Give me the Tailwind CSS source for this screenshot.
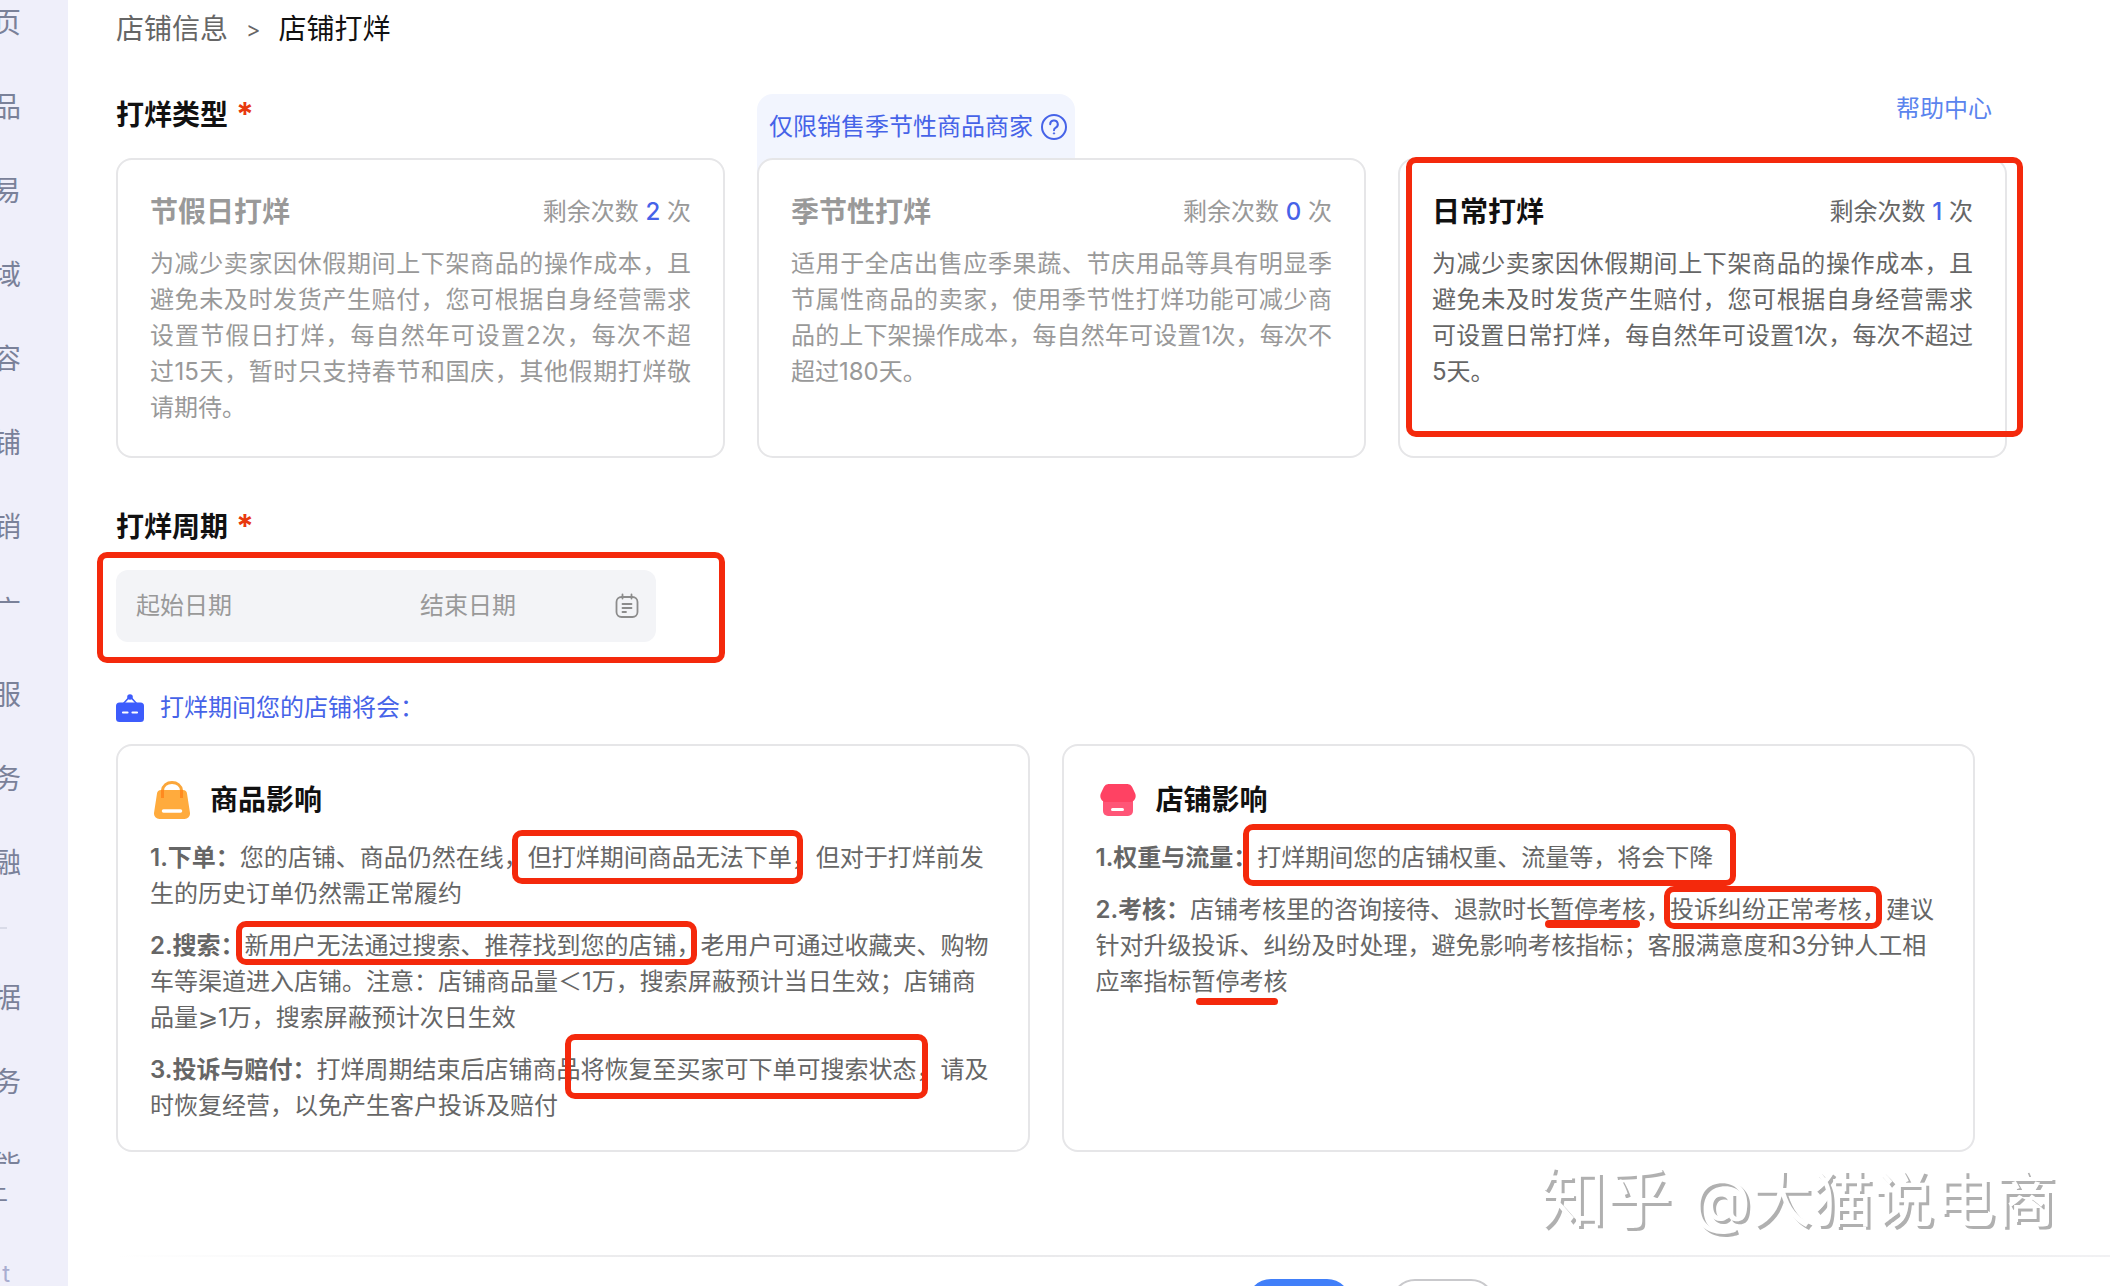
<!DOCTYPE html>
<html lang="zh-CN">
<head>
    <meta charset="UTF-8">
    <meta name="viewport" content="width=device-width, initial-scale=1.0">
    <title>店铺打烊</title>
    <!-- Include Tailwind CSS from CDN -->
    <script src="https://cdn.jsdelivr.net/npm/@tailwindcss/browser@4"></script>
</head>
<body class="bg-white font-['Inter','Noto_Sans_CJK_SC',sans-serif] text-2xl">
    <div class="relative flex h-screen overflow-hidden">
        <!-- Collapsed side menu -->
        <nav class="w-[68px] shrink-0 overflow-hidden bg-[#efeffa] text-[28px] text-[#7a8199]">
            <ul class="-mt-[19px] w-[21px] leading-[84px]">
                <li class="flex h-[84px] justify-end">页</li>
                <li class="flex h-[84px] justify-end">品</li>
                <li class="flex h-[84px] justify-end">易</li>
                <li class="flex h-[84px] justify-end">域</li>
                <li class="flex h-[84px] justify-end">容</li>
                <li class="flex h-[84px] justify-end">铺</li>
                <li class="flex h-[84px] justify-end">销</li>
                <li class="flex h-[84px] justify-end">广</li>
                <li class="flex h-[84px] justify-end">服</li>
                <li class="flex h-[84px] justify-end">务</li>
                <li class="flex h-[84px] justify-end">融</li>
            </ul>
            <hr class="mt-[22px] mb-[27px] w-[7px] border-t-2 border-[#d9dbe8]">
            <ul class="w-[21px] leading-[84px]">
                <li class="flex h-[84px] justify-end">据</li>
                <li class="flex h-[84px] justify-end">务</li>
                <li class="flex h-10 justify-end overflow-hidden">能</li>
            </ul>
            <div class="mt-2 flex w-2 justify-end text-2xl leading-10">上</div>
            <div class="mt-10 flex w-[10px] justify-end text-2xl leading-[44px] text-[#a9add0]">t</div>
        </nav>

        <main class="min-w-0 flex-1 pt-[9px] pr-[103px] pl-12">
            <nav class="flex items-center gap-[18px] text-[28px] leading-10">
                <a href="#" class="text-[#666]">店铺信息</a>
                <span class="text-[22px] text-[#666]">&gt;</span>
                <span class="text-[#111]">店铺打烊</span>
            </nav>

            <div class="mt-[46px] flex items-start justify-between">
                <h2 class="flex gap-2 text-[28px] leading-10 font-bold text-[#111]">打烊类型 <span class="text-[32px] text-[#e8390f]">*</span></h2>
                <a href="#" class="mr-[15px] leading-7 text-[#5b84ee]">帮助中心</a>
            </div>

            <section class="mt-[23px] grid grid-cols-3 gap-8">
                <article class="rounded-2xl border-2 border-[#e6e6e8] bg-white px-8 pt-8 pb-[30px] text-[#999]">
                    <header class="flex items-center justify-between leading-10">
                        <h3 class="text-[28px] font-bold">节假日打烊</h3>
                        <p>剩余次数 <span class="font-medium text-[#4663e8]">2</span> 次</p>
                    </header>
                    <p class="mt-3.5 text-justify leading-9">为减少卖家因休假期间上下架商品的操作成本，且避免未及时发货产生赔付，您可根据自身经营需求设置节假日打烊，每自然年可设置2次，每次不超过15天，暂时只支持春节和国庆，其他假期打烊敬请期待。</p>
                </article>

                <div class="relative">
                    <div class="absolute -top-16 left-0 flex h-20 items-start gap-2 rounded-t-2xl bg-[#f2f5fe] pr-2 pl-3 pt-[15px] leading-9 text-[#4663e8]">
                        仅限销售季节性商品商家
                        <svg class="mt-[5px] size-[26px]" viewBox="0 0 26 26" fill="none" stroke="currentColor" stroke-width="2">
                            <circle cx="13" cy="13" r="12" />
                            <path d="M9.2 10.2a3.8 3.8 0 1 1 5.6 3.4c-1.2.7-1.8 1.2-1.8 2.6" stroke-linecap="round" />
                            <circle cx="13" cy="19.4" r=".7" fill="currentColor" stroke-width="1" />
                        </svg>
                    </div>
                    <article class="relative h-full rounded-2xl border-2 border-[#e6e6e8] bg-white px-8 pt-8 pb-[30px] text-[#999]">
                        <header class="flex items-center justify-between leading-10">
                            <h3 class="text-[28px] font-bold">季节性打烊</h3>
                            <p>剩余次数 <span class="font-medium text-[#4663e8]">0</span> 次</p>
                        </header>
                        <p class="mt-3.5 text-justify leading-9">适用于全店出售应季果蔬、节庆用品等具有明显季节属性商品的卖家，使用季节性打烊功能可减少商品的上下架操作成本，每自然年可设置1次，每次不超过180天。</p>
                    </article>
                </div>

                <article class="relative rounded-2xl border-2 border-[#e6e6e8] bg-white px-8 pt-8 pb-[30px] text-[#666]">
                    <header class="flex items-center justify-between leading-10">
                        <h3 class="text-[28px] font-bold text-[#111]">日常打烊</h3>
                        <p>剩余次数 <span class="font-medium text-[#4663e8]">1</span> 次</p>
                    </header>
                    <p class="mt-3.5 text-justify leading-9">为减少卖家因休假期间上下架商品的操作成本，且避免未及时发货产生赔付，您可根据自身经营需求可设置日常打烊，每自然年可设置1次，每次不超过5天。</p>
                    <div class="pointer-events-none absolute -top-[3px] -right-[18px] left-1.5 h-[280px] rounded-[10px] border-6 border-[#f4290c]"></div>
                </article>
            </section>

            <h2 class="mt-[49px] flex gap-2 text-[28px] leading-10 font-bold text-[#111]">打烊周期 <span class="text-[32px] text-[#e8390f]">*</span></h2>
            <div class="relative mt-[23px] flex h-[72px] w-[540px] items-center rounded-xl bg-[#f3f4f7] pr-4 pl-5">
                <input type="text" aria-label="起始日期" placeholder="起始日期" class="w-[284px] bg-transparent outline-none placeholder:text-[#999]">
                <input type="text" aria-label="结束日期" placeholder="结束日期" class="min-w-0 flex-1 bg-transparent outline-none placeholder:text-[#999]">
                <svg class="size-[26px]" viewBox="0 0 26 26" fill="none" stroke="#8c8c8c" stroke-width="1.8" stroke-linecap="round">
                    <rect x="2.500" y="4" width="21" height="20" rx="5" />
                    <path d="M8.500 1.500v4M17.500 1.500v4M8.500 11h9M8.500 15h9M8.500 19h3.500" />
                </svg>
                <div class="pointer-events-none absolute -top-[18px] -left-[19px] h-[111px] w-[628px] rounded-[10px] border-6 border-[#f4290c]"></div>
            </div>

            <div class="mt-[46px] flex items-center gap-4 leading-10 text-[#4663e8]">
                <svg class="size-7" viewBox="0 0 28 28">
                    <path d="M7.500 9.500L12.500 4h3l5 5.500" fill="none" stroke="#3d5cfc" stroke-width="1.600" />
                    <circle cx="14" cy="3" r="2.800" fill="#3d5cfc" />
                    <rect y="8.500" width="28" height="19.500" rx="3.500" fill="#3d5cfc" />
                    <path d="M7 18.500h4.500M16.500 18.500H21" stroke="#fff" stroke-width="2.200" stroke-linecap="round" />
                </svg>
                打烊期间您的店铺将会：
            </div>

            <section class="mr-8 mt-4 grid grid-cols-2 gap-8 text-[#666]">
                <article class="relative rounded-2xl border-2 border-[#e6e6e8] px-8 pt-8 pb-[26px]">
                    <header class="flex items-center gap-5 pl-1">
                        <svg class="h-[38px] w-9" viewBox="0 0 36 38">
                            <path d="M7 9h22a4 4 0 0 1 4 3.500L36 32a5.500 5.500 0 0 1-5.500 6h-25A5.500 5.500 0 0 1 0 32l3-19.500A4 4 0 0 1 7 9z" fill="#ffab3d" />
                            <path d="M8.500 9.500C9 4.500 13 1.500 18 1.500s9 3 9.500 8" fill="none" stroke="#fba63a" stroke-width="3" />
                            <path d="M8.500 9v8M27.500 9v8" stroke="#ff8a1f" stroke-width="3" />
                            <path d="M9.500 30h17" stroke="#fff" stroke-width="3.500" stroke-linecap="round" />
                        </svg>
                        <h3 class="text-[28px] leading-11 font-bold text-[#111]">商品影响</h3>
                    </header>
                    <div class="mt-[18px] space-y-4 leading-9">
                        <p><b class="font-semibold">1.下单：</b>您的店铺、商品仍然在线，但打烊期间商品无法下单，但对于打烊前发生的历史订单仍然需正常履约</p>
                        <p><b class="font-semibold">2.搜索：</b>新用户无法通过搜索、推荐找到您的店铺，老用户可通过收藏夹、购物车等渠道进入店铺。注意：店铺商品量＜1万，搜索屏蔽预计当日生效；店铺商品量⩾1万，搜索屏蔽预计次日生效</p>
                        <p><b class="font-semibold">3.投诉与赔付：</b>打烊周期结束后店铺商品将恢复至买家可下单可搜索状态，请及时恢复经营，以免产生客户投诉及赔付</p>
                    </div>
                    <div class="pointer-events-none absolute top-[84px] left-[394px] h-[54px] w-[291px] rounded-[10px] border-6 border-[#f4290c]"></div>
                    <div class="pointer-events-none absolute top-[175px] left-[118px] h-[44px] w-[461px] rounded-[10px] border-6 border-[#f4290c]"></div>
                    <div class="pointer-events-none absolute top-[288px] left-[447px] h-[65px] w-[363px] rounded-[10px] border-6 border-[#f4290c]"></div>
                </article>

                <article class="relative rounded-2xl border-2 border-[#e6e6e8] px-8 pt-8 pb-[26px]">
                    <header class="flex items-center gap-5 pl-1">
                        <svg class="h-[38px] w-9" viewBox="0 0 36 38">
                            <rect x="3" y="12" width="30" height="23" rx="5" fill="#ff5577" />
                            <path d="M8.500 3h19a5 5 0 0 1 4.500 2.800l3.200 6.700c1.600 4-1 8.500-5.200 8.500H6c-4.200 0-6.800-4.500-5.200-8.500L4 5.800A5 5 0 0 1 8.500 3z" fill="#ff4263" />
                            <path d="M12.500 28.500h10" stroke="#fff" stroke-width="3" stroke-linecap="round" />
                        </svg>
                        <h3 class="text-[28px] leading-11 font-bold text-[#111]">店铺影响</h3>
                    </header>
                    <div class="mt-[18px] space-y-4 leading-9">
                        <p><b class="font-semibold">1.权重与流量：</b>打烊期间您的店铺权重、流量等，将会下降</p>
                        <p><b class="font-semibold">2.考核：</b>店铺考核里的咨询接待、退款时长暂停考核，投诉纠纷正常考核，建议针对升级投诉、纠纷及时处理，避免影响考核指标；客服满意度和3分钟人工相应率指标暂停考核</p>
                    </div>
                    <div class="pointer-events-none absolute top-[78px] left-[179px] h-[62px] w-[493px] rounded-[10px] border-6 border-[#f4290c]"></div>
                    <div class="pointer-events-none absolute top-[140px] left-[600px] h-[43px] w-[218px] rounded-[10px] border-6 border-[#f4290c]"></div>
                    <div class="pointer-events-none absolute top-[174px] left-[481px] h-2 w-[95px] rounded-sm bg-[#f4290c]"></div>
                    <div class="pointer-events-none absolute top-[252px] left-[132px] h-[7px] w-[82px] rounded-sm bg-[#f4290c]"></div>
                </article>
            </section>

            <footer class="-mr-[103px] mt-[103px]">
                <div class="h-0.5 bg-linear-to-r from-white via-[#e8e8ea] via-30% to-[#f1f1f3]"></div>
                <div class="flex justify-center gap-10 pt-[22px] pl-[516px]">
                    <button type="button" aria-label="确定" class="h-16 w-[104px] rounded-3xl bg-[#417ff9]"></button>
                    <button type="button" aria-label="取消" class="h-16 w-[104px] rounded-3xl border-2 border-[#c9c9cc] bg-white"></button>
                </div>
            </footer>
        </main>

        <!-- Watermark -->
        <div class="pointer-events-none absolute right-[54px] bottom-[46px] flex items-baseline gap-5 text-[61px] leading-20 text-white [text-shadow:3px_3px_0_#b0b0b0]">
            <span class="text-[66px]">知乎</span>
            <span>@大猫说电商</span>
        </div>
    </div>
</body>
</html>
